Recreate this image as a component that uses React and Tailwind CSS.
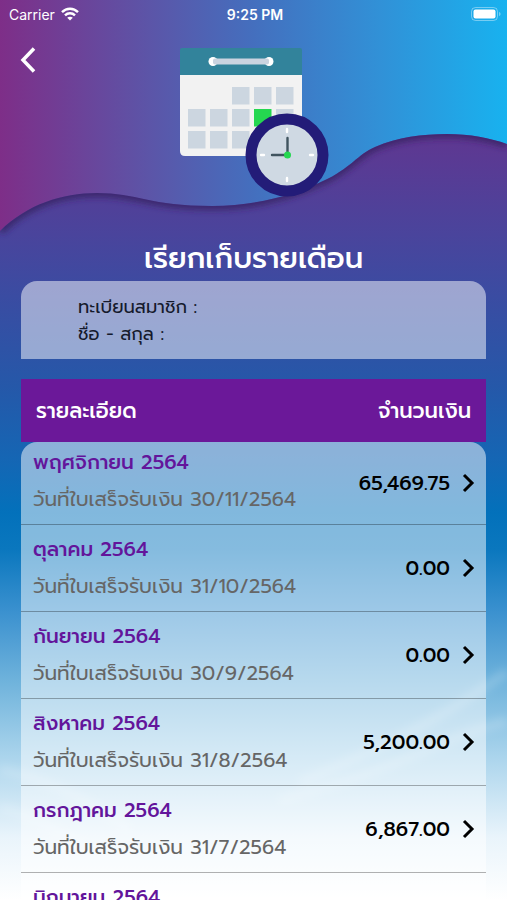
import React from 'react';

const bills = [
  { month: 'พฤศจิกายน 2564', date: '30/11/2564', amount: '65,469.75' },
  { month: 'ตุลาคม 2564', date: '31/10/2564', amount: '0.00' },
  { month: 'กันยายน 2564', date: '30/9/2564', amount: '0.00' },
  { month: 'สิงหาคม 2564', date: '31/8/2564', amount: '5,200.00' },
  { month: 'กรกฎาคม 2564', date: '31/7/2564', amount: '6,867.00' },
  { month: 'มิถุนายน 2564' },
];

const WAVE =
  'M0 231 C28 204 62 193 97 193 C137 193 150 206 212 206 C258 206 296 194 323 181 C350 169 358 154 375 147 C398 137 422 134 447 134 C470 134 490 138 507 144';

function WaveHeader() {
  return (
    <svg
      className="absolute inset-x-0 top-0 h-[240px] w-full"
      viewBox="0 0 507 240"
      preserveAspectRatio="none"
      aria-hidden="true"
    >
      <defs>
        <linearGradient id="sky" x1="0" x2="1" y1="0" y2="0">
          <stop offset="0" stopColor="#7e2e88" />
          <stop offset="0.25" stopColor="#614fa3" />
          <stop offset="0.5" stopColor="#446fbe" />
          <stop offset="0.75" stopColor="#3191d7" />
          <stop offset="1" stopColor="#18b2ef" />
        </linearGradient>
        <clipPath id="below">
          <path d={`${WAVE} V240 H0 Z`} />
        </clipPath>
        <filter id="soft" x="-10%" y="-20%" width="120%" height="140%">
          <feGaussianBlur stdDeviation="3" />
        </filter>
      </defs>
      <path d={`${WAVE} V0 H0 Z`} fill="url(#sky)" />
      <g clipPath="url(#below)">
        <path d={WAVE} fill="none" stroke="#35235f" strokeOpacity="0.8" strokeWidth="8" filter="url(#soft)" />
      </g>
    </svg>
  );
}

function Wisps() {
  return (
    <svg
      className="absolute inset-x-0 bottom-0 h-[300px] w-full"
      viewBox="0 0 507 300"
      preserveAspectRatio="none"
      fill="none"
      stroke="white"
      aria-hidden="true"
    >
      <defs>
        <filter id="mist" x="-10%" y="-20%" width="120%" height="140%">
          <feGaussianBlur stdDeviation="4" />
        </filter>
      </defs>
      <g filter="url(#mist)" strokeOpacity="0.18" strokeWidth="9">
        <path d="M507 72C480 90 430 130 300 182" />
        <path d="M507 122C460 130 400 170 280 200" />
        <path d="M0 170C40 176 90 200 130 230" />
        <path d="M0 208C30 214 60 232 90 250" />
      </g>
    </svg>
  );
}

function StatusBar() {
  return (
    <div className="grid grid-cols-3 items-center h-7 pl-[9px] pr-[6px] text-white font-['Inter','Liberation_Sans',sans-serif]">
      <div className="flex items-center gap-[6px] text-[14px]">
        Carrier
        <svg width="18" height="14" viewBox="0 0 18 14" fill="none" stroke="white" strokeWidth="2.4" aria-hidden="true">
          <path d="M1 5.2C5.5 0.6 12.5 0.6 17 5.2" />
          <path d="M4 8.4C6.8 5.6 11.2 5.6 14 8.4" />
          <path d="M9 13.6L6.2 10.8C7.8 9.3 10.2 9.3 11.8 10.8Z" fill="white" stroke="none" />
        </svg>
      </div>
      <div className="text-center text-[14px] font-semibold">9:25 PM</div>
      <svg className="justify-self-end" width="30" height="14" viewBox="0 0 30 14" aria-hidden="true">
        <rect x="0.5" y="0.5" width="26" height="13" rx="4" fill="none" stroke="white" strokeOpacity="0.4" />
        <rect x="2.5" y="2.5" width="22" height="9" rx="2" fill="white" />
        <path d="M28 5v4c1-.4 1.6-1.2 1.6-2S29 5.4 28 5Z" fill="white" fillOpacity="0.4" />
      </svg>
    </div>
  );
}

function CalendarClock() {
  const days = [
    [53, 39], [75, 39], [97, 39],
    [9, 61], [31, 61], [53, 61], [97, 61],
    [9, 83], [31, 83], [53, 83], [75, 83],
  ];
  return (
    <svg width="150" height="150" viewBox="0 0 150 150" aria-hidden="true">
      <path d="M1 26H123V104Q123 108 119 108H6Q1 108 1 103Z" fill="#f2f2f2" />
      <path d="M1 2Q1 0 3 0H121Q123 0 123 2V27H1Z" fill="#32839b" />
      <circle cx="34" cy="13.5" r="4.5" fill="white" />
      <circle cx="90" cy="13.5" r="4.5" fill="white" />
      <rect x="34" y="10.5" width="56" height="6" rx="2" fill="#cad3e0" />
      {days.map(([x, y]) => (
        <rect key={`${x}-${y}`} x={x} y={y} width="17.5" height="17.5" fill="#ccd6e0" />
      ))}
      <rect x="75" y="61" width="17.5" height="17.5" fill="#25d750" />
      <circle cx="108" cy="107" r="36" fill="#cfd9e3" stroke="#231c78" strokeWidth="11" />
      <g stroke="white" strokeWidth="2.4" strokeLinecap="round">
        <path d="M108 81v3M108 130v3M82 107h3M131 107h3" />
      </g>
      <g stroke="#40545f" strokeWidth="2.4" strokeLinecap="round">
        <path d="M108.5 90v17M93 107h15" />
      </g>
      <circle cx="108.5" cy="107" r="3.5" fill="#25d750" />
    </svg>
  );
}

function BillRow({ bill, first }) {
  return (
    <tr className={first ? 'h-[83px]' : 'h-[87px]'}>
      <td className={`border-b border-black/30 bg-white/50 pl-3 align-top ${first ? 'rounded-tl-2xl pt-[2px]' : 'pt-[6px]'}`}>
        <div className="text-[20px] leading-[37px] font-medium text-[#63159b]">{bill.month}</div>
        {bill.date && (
          <div className="text-[20px] leading-[37px] whitespace-nowrap text-[#666]">วันที่ใบเสร็จรับเงิน {bill.date}</div>
        )}
      </td>
      <td className={`border-b border-black/30 bg-white/50 pr-[10px] ${first ? 'rounded-tr-2xl' : ''}`}>
        <div className="flex items-center justify-end gap-[10px] text-[20px] font-medium text-black">
          {bill.amount}
          <button type="button" aria-label={bill.month}>
            <svg width="16" height="20" viewBox="0 0 16 20" fill="none" stroke="black" strokeWidth="3" aria-hidden="true">
              <path d="M4 2L12 10L4 18" />
            </svg>
          </button>
        </div>
      </td>
    </tr>
  );
}

export default function App() {
  return (
    <div className="relative h-screen overflow-hidden bg-[linear-gradient(180deg,#5f3791_15%,#4a449c_26%,#3a4ca2_33%,#2558a9_43%,#1566b4_51%,#0371bb_57%,#0a77be_61%,#3b91cf_68%,#71b4dc_76%,#aad4ec_84%,#e9f4fb_93%,#ffffff_100%)] font-['Prompt','Kanit','Noto_Sans_Thai','Noto_Sans',sans-serif]">
      <WaveHeader />
      <Wisps />
      <div className="relative flex h-full flex-col">
        <StatusBar />

        <header className="relative flex justify-center pt-5 pl-[1px]">
          <button type="button" aria-label="ย้อนกลับ" className="absolute left-5 top-[19px]">
            <svg width="16" height="26" viewBox="0 0 16 26" fill="none" stroke="white" strokeWidth="3.5" aria-hidden="true">
              <path d="M14 1.5L3 13L14 24.5" />
            </svg>
          </button>
          <CalendarClock />
        </header>

        <main className="flex min-h-0 flex-1 flex-col px-[21px] pt-10">
          <h1 className="text-center text-[29px] leading-[40px] font-medium text-white">เรียกเก็บรายเดือน</h1>

          <section className="mt-[3px] h-[78px] shrink-0 rounded-t-2xl bg-white/50 pt-[13px] pl-[57px] text-[18px] leading-[27px] text-[#151a2c]">
            <p>ทะเบียนสมาชิก :</p>
            <p>ชื่อ - สกุล :</p>
          </section>

          <table className="mt-5 w-full border-separate border-spacing-0">
            <thead>
              <tr className="h-[63px] bg-[#6b1899] text-[21px] text-white">
                <th className="pt-[2px] pl-[15px] text-left font-medium">รายละเอียด</th>
                <th className="pt-[2px] pr-[15px] text-right font-medium">จำนวนเงิน</th>
              </tr>
            </thead>
            <tbody>
              {bills.map((bill, i) => (
                <BillRow key={bill.month} bill={bill} first={i === 0} />
              ))}
            </tbody>
          </table>
        </main>
      </div>
    </div>
  );
}
